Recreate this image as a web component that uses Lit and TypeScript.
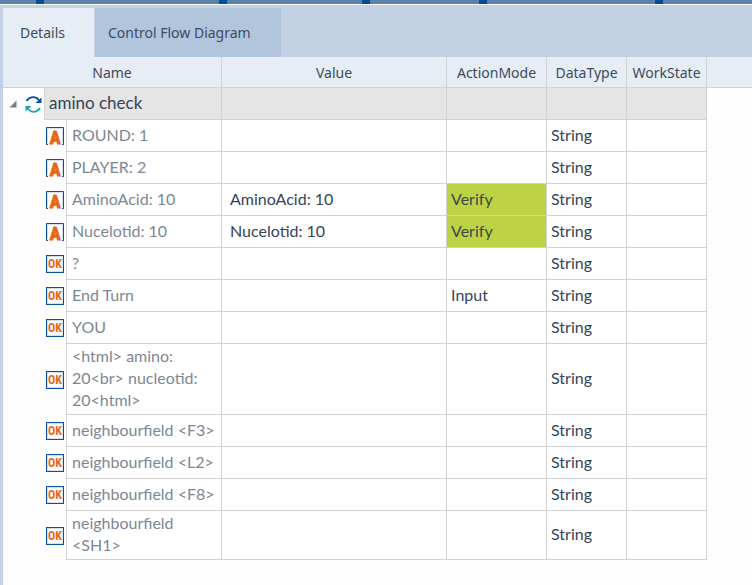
import { LitElement, html, css, svg, nothing } from "lit";
import { customElement, property } from "lit/decorators.js";
import { classMap } from "lit/directives/class-map.js";

type Kind = "label" | "button";

interface Row {
  kind: Kind;
  name: string;
  value?: string;
  action?: string;
}

const ROWS: Row[] = [
  { kind: "label", name: "ROUND: 1" },
  { kind: "label", name: "PLAYER: 2" },
  { kind: "label", name: "AminoAcid: 10", value: "AminoAcid: 10", action: "Verify" },
  { kind: "label", name: "Nucelotid: 10", value: "Nucelotid: 10", action: "Verify" },
  { kind: "button", name: "?" },
  { kind: "button", name: "End Turn", action: "Input" },
  { kind: "button", name: "YOU" },
  { kind: "button", name: "<html> amino: 20<br> nucleotid: 20<html>" },
  { kind: "button", name: "neighbourfield <F3>" },
  { kind: "button", name: "neighbourfield <L2>" },
  { kind: "button", name: "neighbourfield <F8>" },
  { kind: "button", name: "neighbourfield <SH1>" },
];

const COLUMNS = ["Value", "ActionMode", "DataType", "WorkState"];

/** Small boxed icon that tells the control type of a row. */
@customElement("kind-icon")
export class KindIcon extends LitElement {
  @property() kind: Kind = "label";

  static styles = css`
    :host { display: block; width: 18px; height: 18px; }
    svg { display: block; overflow: visible; }
    text { font-family: "Liberation Sans Narrow", "Roboto Condensed", "Liberation Sans", sans-serif; font-weight: 700; fill: #e8681a; text-anchor: middle; }
    .a { font-size: 18px; stroke: #e8681a; stroke-width: 1; }
    .ok { font-size: 12px; }
    .frame { fill: #fff; stroke: #0a519c; }
    .inner { fill: none; stroke: #d3e0ee; }
  `;

  render() {
    return html`<svg width="18" height="18" viewBox="0 0 18 18" aria-hidden="true">
      ${this.kind === "label"
        ? svg`<path class="frame" d="M2 17.500H.5V.5h17v17H16"/>
              <path class="inner" d="M1.500 16V1.500h15V16"/>
              <text class="a" x="9" y="17">A</text>`
        : svg`<rect class="frame" x=".5" y=".5" width="17" height="17"/>
              <rect class="inner" x="1.500" y="1.500" width="15" height="15"/>
              <text class="ok" x="9" y="13">OK</text>`}
    </svg>`;
  }
}

@customElement("app-root")
export class AppRoot extends LitElement {
  static styles = css`
    :host { display: block; min-height: 100vh; background: #fdfdfd; color: #34445a; border-left: 3px solid #c3d1e5; box-sizing: border-box; font-family: Lato, Carlito, sans-serif; font-size: 16px; line-height: 22px; }
    .strip { display: flex; gap: 8px; height: 4px; margin-left: -3px; background: #004c97; border-bottom: 1px solid #fff; }
    .seg { background: #5b82aa; }
    .s1 { width: 36px; } .s2 { width: 175px; } .s3 { width: 135px; } .s4 { width: 109px; } .s5 { width: 168px; }
    .s6 { flex: 1; }
    .tabs { display: flex; gap: 1px; padding-top: 3px; background: #c3d1e5; }
    .tab { border: 0; margin: 0; height: 49px; background: #b1c6dc; color: #3c4b60; font: 14px/22px "Noto Sans", "Open Sans", sans-serif; text-align: left; padding: 0 30px 0 13px; white-space: nowrap; }
    .tab.active { background: #e6edf5; padding: 0 29px 0 17px; }
    table { width: 100%; table-layout: fixed; border-collapse: separate; border-spacing: 0; }
    .c-tree { width: 42px; } .c-icon { width: 22px; } .c-name { width: 155px; } .c-value { width: 225px; }
    .c-action { width: 100px; } .c-type { width: 80px; }
    th, td { box-sizing: border-box; border-right: 1px solid #d2d2d2; border-bottom: 1px solid #d2d2d2; }
    th { height: 31px; padding: 2px 0 0; background: #e6edf5; color: #3c4b60; font: 14px/22px "Noto Sans", "Open Sans", sans-serif; text-align: center; white-space: nowrap; }
    td { height: 32px; padding: 1px 4px 3px; background: #fff; vertical-align: middle; text-align: left; }
    th.fill { border-right: 0; }
    td.fill { border: 0; background: none; }
    td.gutter { padding: 0; border-bottom: 0; background: none; }
    .node { display: flex; align-items: center; gap: 8px; padding-left: 6px; }
    .toggle { display: flex; border: 0; padding: 0; background: none; }
    .leaf { display: flex; justify-content: flex-end; padding-right: 2px; }
    td.name { color: #7d8793; padding-left: 5px; }
    td.value { padding-left: 8px; }
    tr.group td.cell { background: #e5e5e5; color: #34445a; font-size: 17px; }
    td.verify { background: #bdd345; color: #3a4a47; }
  `;

  private renderRow(r: Row) {
    return html`<tr>
      <td class="gutter" colspan="2"><div class="leaf"><kind-icon .kind=${r.kind}></kind-icon></div></td>
      <td class="name">${r.name}</td>
      <td class="value">${r.value ?? nothing}</td>
      <td class=${classMap({ verify: r.action === "Verify" })}>${r.action ?? nothing}</td>
      <td>String</td>
      <td></td>
      <td class="fill"></td>
    </tr>`;
  }

  render() {
    return html`
      <div class="strip">${[1, 2, 3, 4, 5, 6].map((n) => html`<span class="seg s${n}"></span>`)}</div>
      <div class="tabs" role="tablist">
        <button class="tab active" role="tab" aria-selected="true">Details</button>
        <button class="tab" role="tab" aria-selected="false">Control Flow Diagram</button>
      </div>
      <table>
        <colgroup>
          <col class="c-tree"><col class="c-icon"><col class="c-name"><col class="c-value">
          <col class="c-action"><col class="c-type"><col class="c-type"><col>
        </colgroup>
        <thead>
          <tr><th colspan="3">Name</th>${COLUMNS.map((c) => html`<th>${c}</th>`)}<th class="fill"></th></tr>
        </thead>
        <tbody>
          <tr class="group">
            <td class="gutter"><div class="node">
              <button class="toggle" aria-label="Collapse amino check">
                <svg width="8" height="8" viewBox="0 0 8 8"><path d="M7.500.5v7H.5z" fill="#7d7d7d"/></svg>
              </button>
              <svg width="17" height="17" viewBox="0 0 17 17" aria-hidden="true">
                <path d="M1.500 5C4.500.3 10.500-.2 14 4" fill="none" stroke="#0a519c" stroke-width="1.800"/>
                <path d="M16.500 1.500v5.500h-6z" fill="#0a519c"/>
                <path d="M15 12C12 16.700 6.500 17.200 3 13" fill="none" stroke="#1f9fb0" stroke-width="1.800"/>
                <path d="M.5 15.500v-5.500h6z" fill="#1f9fb0"/>
              </svg>
            </div></td>
            <td class="cell" colspan="2">amino check</td>
            <td class="cell"></td><td class="cell"></td><td class="cell"></td><td class="cell"></td>
            <td class="fill"></td>
          </tr>
          ${ROWS.map((r) => this.renderRow(r))}
        </tbody>
      </table>
    `;
  }
}
